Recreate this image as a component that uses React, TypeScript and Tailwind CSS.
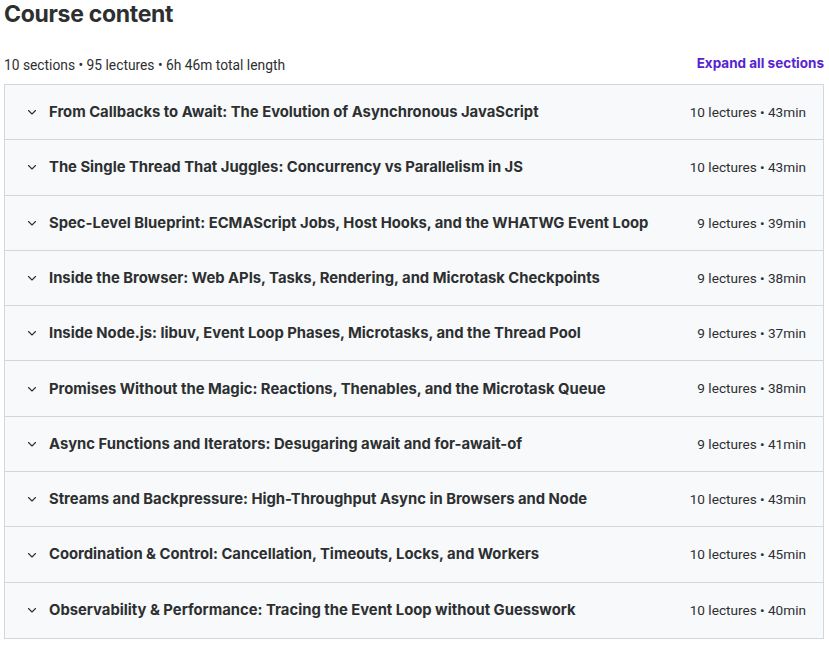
import React from "react";

const sections: [string, string][] = [
  ["From Callbacks to Await: The Evolution of Asynchronous JavaScript", "10 lectures • 43min"],
  ["The Single Thread That Juggles: Concurrency vs Parallelism in JS", "10 lectures • 43min"],
  ["Spec-Level Blueprint: ECMAScript Jobs, Host Hooks, and the WHATWG Event Loop", "9 lectures • 39min"],
  ["Inside the Browser: Web APIs, Tasks, Rendering, and Microtask Checkpoints", "9 lectures • 38min"],
  ["Inside Node.js: libuv, Event Loop Phases, Microtasks, and the Thread Pool", "9 lectures • 37min"],
  ["Promises Without the Magic: Reactions, Thenables, and the Microtask Queue", "9 lectures • 38min"],
  ["Async Functions and Iterators: Desugaring await and for-await-of", "9 lectures • 41min"],
  ["Streams and Backpressure: High-Throughput Async in Browsers and Node", "10 lectures • 43min"],
  ["Coordination & Control: Cancellation, Timeouts, Locks, and Workers", "10 lectures • 45min"],
  ["Observability & Performance: Tracing the Event Loop without Guesswork", "10 lectures • 40min"],
];

function Chevron() {
  return (
    <svg width="10" height="10" viewBox="0 0 10 10" fill="none" className="shrink-0">
      <path d="M1.5 3.5 L5 7 L8.5 3.5" stroke="#2d2f31" strokeWidth="1.1" strokeLinecap="round" strokeLinejoin="round" />
    </svg>
  );
}

export default function App() {
  return (
    <div className="w-[829px] h-[646px] bg-white px-[4px] text-[#2d2f31] overflow-hidden" style={{ fontFamily: "Inter, 'Noto Sans', sans-serif" }}>
      <h2 className="text-[23px] leading-[28px] font-bold tracking-[-0.3px]">Course content</h2>
      <div className="flex items-end justify-between mt-[24px] h-[24px] pr-[1px]">
        <span className="text-[13.8px] text-[#2d2f31] leading-[20px] pb-[1px]" style={{ fontFamily: "Roboto, sans-serif" }}>10 sections • 95 lectures • 6h 46m total length</span>
        <span className="text-[13.5px] font-bold text-[#5624d0] leading-[20px] pb-[3px]">Expand all sections</span>
      </div>
      <div className="mt-[8px] w-[820px] border border-[#d1d7dc]">
        {sections.map(([t, m], i) => (
          <div
            key={i}
            className={`flex items-center h-[55.3px] bg-[#f7f9fa] pl-[22px] pr-[17px] ${i < sections.length - 1 ? "border-b border-[#d1d7dc]" : ""}`}
          >
            <Chevron />
            <span className="ml-[12px] text-[14.8px] font-bold flex-1 whitespace-nowrap">{t}</span>
            <span className="text-[13.6px] text-[#2d2f31] whitespace-nowrap" style={{ fontFamily: "Roboto, sans-serif" }}>{m}</span>
          </div>
        ))}
      </div>
    </div>
  );
}
